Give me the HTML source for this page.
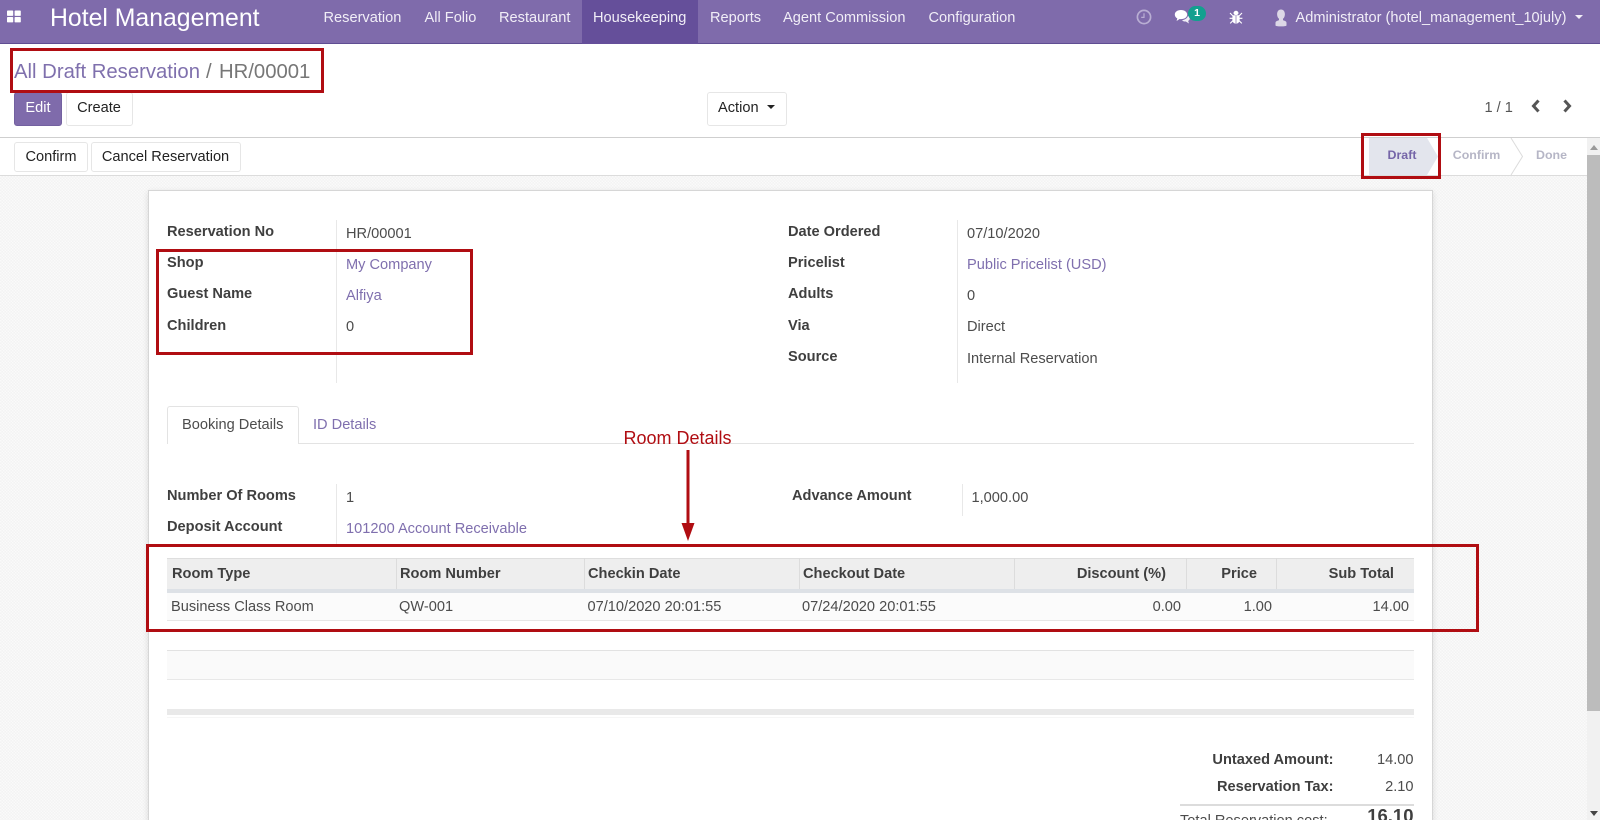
<!DOCTYPE html>
<html lang="en">
<head>
<meta charset="utf-8">
<title>Hotel Management</title>
<style>
*{box-sizing:border-box}
html,body{margin:0;padding:0;width:1600px;height:820px;overflow:hidden;background:#fff}
body{position:relative;font-family:"Liberation Sans",Arial,sans-serif;font-size:14.6px;color:#4c4c4c}
.t{position:absolute;white-space:nowrap;line-height:20px;height:20px}
.r{transform:translateX(-100%)}
.c{transform:translateX(-50%)}
.b{font-weight:700;color:#3f3f3f}
.l{color:#7f6fae}
.n{color:#f1eef7}
.box{position:absolute;border:3px solid #b00d12;z-index:5}
.btn{position:absolute;background:#fff;border:1px solid #e6e6e6;border-radius:3px}
.sep{position:absolute;width:1px;background:#e8e8e8}
.hd{position:absolute;top:558px;height:31px;width:1px;background:#dcdcdc}
.ab{position:absolute}
</style>
</head>
<body>

<!-- navbar -->
<div class="ab" style="left:0;top:0;width:1600px;height:44px;background:#7f6bab;border-bottom:1px solid #5f4d92"></div>
<div class="ab" style="left:582px;top:0;width:116px;height:44px;background:#654f9a"></div>
<svg class="ab" style="left:7px;top:10px" width="14" height="13" viewBox="0 0 14 13"><g fill="#fff"><rect x="0" y="0.5" width="6.2" height="5.4" rx=".8"/><rect x="7.6" y="0.5" width="6.2" height="5.4" rx=".8"/><rect x="0" y="7" width="6.2" height="5.4" rx=".8"/><rect x="7.6" y="7" width="6.2" height="5.4" rx=".8"/></g></svg>
<div class="t" style="left:50px;top:2px;font-size:24.8px;line-height:30px;height:30px;color:#fff;padding-top:1.5px">Hotel Management</div>
<div class="t n" style="left:323.5px;top:8px">Reservation</div>
<div class="t n" style="left:424.5px;top:8px">All Folio</div>
<div class="t n" style="left:499px;top:8px">Restaurant</div>
<div class="t n" style="left:593px;top:8px">Housekeeping</div>
<div class="t n" style="left:710px;top:8px">Reports</div>
<div class="t n" style="left:783px;top:8px">Agent Commission</div>
<div class="t n" style="left:928.5px;top:8px">Configuration</div>

<svg class="ab" style="left:1136px;top:9px" width="16" height="16" viewBox="0 0 16 16"><circle cx="8" cy="8" r="6.6" fill="none" stroke="#b9aed3" stroke-width="1.7"/><path d="M8 4.2V8.4H5.2" fill="none" stroke="#b9aed3" stroke-width="1.2"/></svg>
<svg class="ab" style="left:1174px;top:9px" width="18" height="16" viewBox="0 0 18 16"><path d="M7 1C3.2 1 .8 3 .8 5.6c0 1.6 1 3 2.500 3.800L2.600 12l3-2c.5.1 1 .1 1.400.1 3.600 0 6.200-2 6.200-4.500S10.600 1 7 1z" fill="#fff"/><path d="M14 6.800c.8.600 1.800 1.400 1.800 2.700 0 1-.7 1.900-1.700 2.400l.9 2.600-3.200-2c-1.600.1-3-.4-3.800-1.300 2.800-.2 5.600-2 6-4.400z" fill="#f1eef7"/></svg>
<div class="ab" style="left:1188px;top:6px;width:18px;height:15px;border-radius:8px;background:#12a08f;color:#fff;font-size:10.500px;line-height:15px;text-align:center;font-weight:700">1</div>
<svg class="ab" style="left:1229px;top:10px" width="14" height="15" viewBox="0 0 14 15"><g fill="#fff"><ellipse cx="7" cy="3" rx="2.500" ry="2.200"/><path d="M3.400 5.200h7.200v4.800c0 2.200-1.600 3.700-3.600 3.700s-3.600-1.500-3.600-3.700z"/></g><path d="M1 3l2.600 2.600M13 3l-2.600 2.600M.6 8.300h3M13.400 8.300h-3M1.200 13.400l2.600-2.600M12.800 13.400l-2.600-2.600" stroke="#fff" stroke-width="1.100" fill="none"/><path d="M7 5.400v8.400" stroke="#7f6bab" stroke-width=".7"/></svg>
<svg class="ab" style="left:1275px;top:9px" width="12" height="18" viewBox="0 0 12 18"><path d="M6 .5c2.500 0 3.900 2 3.900 4.700 0 2-.8 3.700-1.900 4.600v1.500c1.500.4 3.500 1 3.500 2.500v2.600c0 .7-2.200 1-5.500 1s-5.500-.3-5.500-1v-2.600c0-1.500 2-2.100 3.500-2.500V9.800C2.900 8.900 2.100 7.200 2.100 5.200 2.100 2.500 3.500.5 6 .5z" fill="#dcd8e6"/></svg>
<div class="t n" style="left:1295.5px;top:8px">Administrator (hotel_management_10july)</div>
<div class="ab" style="left:1575px;top:15px;border-left:4.500px solid transparent;border-right:4.500px solid transparent;border-top:4.500px solid #f1eef7"></div>

<!-- control panel -->
<div class="t l" style="left:14px;top:60px;font-size:20.300px;line-height:20px;color:#7f70ad;padding-top:1.5px;height:24px">All Draft Reservation</div>
<div class="t" style="left:206px;top:60px;font-size:20.300px;color:#777;padding-top:1.5px;height:24px">/</div>
<div class="t" style="left:219px;top:60px;font-size:20.300px;color:#777;padding-top:1.5px;height:24px">HR/00001</div>
<div class="box" style="left:10px;top:48px;width:314px;height:45px"></div>

<div class="btn" style="left:14px;top:92px;width:48px;height:34px;background:#7f6bab;border-color:#7361a0"></div>
<div class="t c" style="left:38px;top:98px;color:#fff">Edit</div>
<div class="btn" style="left:66px;top:92px;width:67px;height:34px"></div>
<div class="t c" style="left:99px;top:98px;color:#222">Create</div>
<div class="btn" style="left:707px;top:92px;width:80px;height:34px"></div>
<div class="t" style="left:718px;top:98px;color:#222">Action</div>
<div class="ab" style="left:766.500px;top:105px;border-left:4.500px solid transparent;border-right:4.500px solid transparent;border-top:4.500px solid #222"></div>
<div class="t" style="left:1484.500px;top:98px;color:#555">1 / 1</div>
<svg class="ab" style="left:1530px;top:99px" width="12" height="14" viewBox="0 0 12 14"><path d="M8.500 1.500L3.500 7l5 5.500" fill="none" stroke="#555" stroke-width="3"/></svg>
<svg class="ab" style="left:1561px;top:99px" width="12" height="14" viewBox="0 0 12 14"><path d="M3.500 1.500L8.500 7l-5 5.500" fill="none" stroke="#555" stroke-width="3"/></svg>

<div class="ab" style="left:0;top:137px;width:1600px;height:1px;background:#cfcfcf"></div>

<!-- background pattern + sheet -->
<div class="ab" style="left:0;top:175px;width:1587px;height:645px;background-color:#f7f7f7;background-image:repeating-conic-gradient(#f3f3f3 0 25%,#fafafa 0 50%);background-size:3px 3px;border-top:1px solid #dcdcdc"></div>
<div class="ab" style="left:148px;top:190px;width:1285px;height:640px;background:#fff;border:1px solid #d6d6d6;box-shadow:0 2px 6px rgba(0,0,0,.12)"></div>

<!-- status buttons -->
<div class="btn" style="left:14px;top:142px;width:74px;height:30px"></div>
<div class="t c" style="left:51px;top:147px;color:#222">Confirm</div>
<div class="btn" style="left:91px;top:142px;width:150px;height:30px"></div>
<div class="t c" style="left:165.500px;top:147px;color:#222">Cancel Reservation</div>

<svg class="ab" style="left:1369px;top:138px" width="170" height="37" viewBox="0 0 170 37"><path d="M0 0H58L69 18.500L58 37H0z" fill="#e3e5ed"/><path d="M142 0L153.500 18.500L142 37" fill="none" stroke="#dcdcdc"/></svg>
<div class="t c b" style="left:1402px;top:145px;font-size:12.400px;color:#7565a8">Draft</div>
<div class="t c b" style="left:1476.500px;top:145px;font-size:12.400px;color:#b6b6c6">Confirm</div>
<div class="t c b" style="left:1551.500px;top:145px;font-size:12.400px;color:#b6b6c6">Done</div>
<div class="box" style="left:1361px;top:133px;width:80px;height:46px"></div>

<!-- scrollbar -->
<div class="ab" style="left:1587px;top:138px;width:13px;height:682px;background:#f1f1f1"></div>
<div class="ab" style="left:1587px;top:155px;width:13px;height:556px;background:#bcbcbc"></div>
<div class="ab" style="left:1590px;top:145px;border-left:4px solid transparent;border-right:4px solid transparent;border-bottom:5px solid #9a9a9a"></div>
<div class="ab" style="left:1590px;top:811px;border-left:4px solid transparent;border-right:4px solid transparent;border-top:5px solid #444"></div>

<!-- form header -->
<div class="sep" style="left:336px;top:220px;height:163px"></div>
<div class="sep" style="left:957px;top:220px;height:163px"></div>

<div class="t b" style="left:167px;top:222px">Reservation No</div>
<div class="t" style="left:346px;top:224px">HR/00001</div>
<div class="t b" style="left:167px;top:253px">Shop</div>
<div class="t l" style="left:346px;top:255px">My Company</div>
<div class="t b" style="left:167px;top:284px">Guest Name</div>
<div class="t l" style="left:346px;top:286px">Alfiya</div>
<div class="t b" style="left:167px;top:315.500px">Children</div>
<div class="t" style="left:346px;top:317px">0</div>
<div class="box" style="left:156px;top:249px;width:317px;height:106px"></div>

<div class="t b" style="left:788px;top:222px">Date Ordered</div>
<div class="t" style="left:967px;top:224px">07/10/2020</div>
<div class="t b" style="left:788px;top:253px">Pricelist</div>
<div class="t l" style="left:967px;top:255px">Public Pricelist (USD)</div>
<div class="t b" style="left:788px;top:284px">Adults</div>
<div class="t" style="left:967px;top:286px">0</div>
<div class="t b" style="left:788px;top:315.500px">Via</div>
<div class="t" style="left:967px;top:317px">Direct</div>
<div class="t b" style="left:788px;top:347px">Source</div>
<div class="t" style="left:967px;top:348.500px">Internal Reservation</div>

<!-- tabs -->
<div class="ab" style="left:167px;top:443px;width:1247px;height:1px;background:#e3e3e3"></div>
<div class="ab" style="left:167px;top:406px;width:132px;height:38px;background:#fff;border:1px solid #e3e3e3;border-bottom:0;border-radius:3px 3px 0 0"></div>
<div class="t" style="left:182px;top:415px">Booking Details</div>
<div class="t l" style="left:313px;top:415px">ID Details</div>

<div class="t" style="left:623.500px;top:428px;font-size:18px;color:#b00d12;z-index:6">Room Details</div>
<svg class="ab" style="left:680px;top:450px;z-index:6" width="16" height="92" viewBox="0 0 16 92"><path d="M8 0V76" stroke="#b00d12" stroke-width="3"/><path d="M1.500 73H14.500L8 91z" fill="#b00d12"/></svg>

<!-- booking fields -->
<div class="sep" style="left:336px;top:484px;height:60px"></div>
<div class="sep" style="left:962px;top:484px;height:32px"></div>
<div class="t b" style="left:167px;top:486px">Number Of Rooms</div>
<div class="t" style="left:346px;top:487.500px">1</div>
<div class="t b" style="left:167px;top:517px">Deposit Account</div>
<div class="t l" style="left:346px;top:518.500px">101200 Account Receivable</div>
<div class="t b" style="left:792px;top:486px">Advance Amount</div>
<div class="t" style="left:971.500px;top:487.500px">1,000.00</div>

<!-- table -->
<div class="ab" style="left:167px;top:558px;width:1247px;height:31px;background:#eeeeee;border-top:1px solid #dedede"></div>
<div class="ab" style="left:167px;top:589px;width:1247px;height:4px;background:#dde1e6"></div>
<div class="ab" style="left:167px;top:593px;width:1247px;height:27px;background:#fbfbfb"></div>
<div class="ab" style="left:167px;top:620px;width:1247px;height:1px;background:#e6e6e6"></div>
<div class="hd" style="left:396px"></div>
<div class="hd" style="left:584px"></div>
<div class="hd" style="left:799px"></div>
<div class="hd" style="left:1014px"></div>
<div class="hd" style="left:1186px"></div>
<div class="hd" style="left:1276px"></div>

<div class="t b" style="left:172px;top:564px">Room Type</div>
<div class="t b" style="left:400px;top:564px">Room Number</div>
<div class="t b" style="left:588px;top:564px">Checkin Date</div>
<div class="t b" style="left:803px;top:564px">Checkout Date</div>
<div class="t b r" style="left:1166px;top:564px">Discount (%)</div>
<div class="t b r" style="left:1257px;top:564px">Price</div>
<div class="t b r" style="left:1394px;top:564px">Sub Total</div>

<div class="t" style="left:171px;top:597px">Business Class Room</div>
<div class="t" style="left:399px;top:597px">QW-001</div>
<div class="t" style="left:587.500px;top:597px">07/10/2020 20:01:55</div>
<div class="t" style="left:802px;top:597px">07/24/2020 20:01:55</div>
<div class="t r" style="left:1181px;top:597px">0.00</div>
<div class="t r" style="left:1272px;top:597px">1.00</div>
<div class="t r" style="left:1409px;top:597px">14.00</div>

<div class="box" style="left:146px;top:544px;width:1333px;height:88px"></div>

<div class="ab" style="left:167px;top:650px;width:1247px;height:30px;background:#fafafa;border-top:1px solid #e2e2e2;border-bottom:1px solid #e8e8e8"></div>
<div class="ab" style="left:167px;top:709px;width:1247px;height:6px;background:#e9e9e9"></div>
<div class="ab" style="left:167px;top:717px;width:1247px;height:1px;background:#f6f6f6"></div>

<!-- totals -->
<div class="t b r" style="left:1333.500px;top:750px">Untaxed Amount:</div>
<div class="t r" style="left:1413.500px;top:750px">14.00</div>
<div class="t b r" style="left:1333.500px;top:777px">Reservation Tax:</div>
<div class="t r" style="left:1413.500px;top:777px">2.10</div>
<div class="ab" style="left:1180px;top:804px;width:234px;height:2px;background:#dcdcdc"></div>
<div class="t" style="left:1180px;top:811px">Total Reservation cost:</div>
<div class="t b r" style="left:1413.500px;top:804px;font-size:18.500px;line-height:24px;height:24px">16.10</div>

</body>
</html>
